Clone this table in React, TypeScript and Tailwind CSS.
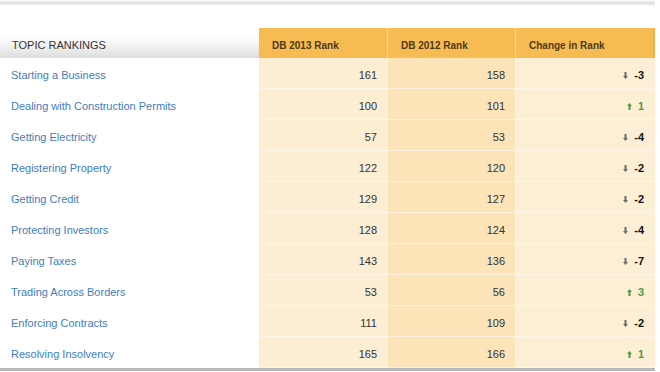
import React from "react";

type Row = { name: string; r13: number; r12: number; change: number };

const rows: Row[] = [
  { name: "Starting a Business", r13: 161, r12: 158, change: -3 },
  { name: "Dealing with Construction Permits", r13: 100, r12: 101, change: 1 },
  { name: "Getting Electricity", r13: 57, r12: 53, change: -4 },
  { name: "Registering Property", r13: 122, r12: 120, change: -2 },
  { name: "Getting Credit", r13: 129, r12: 127, change: -2 },
  { name: "Protecting Investors", r13: 128, r12: 124, change: -4 },
  { name: "Paying Taxes", r13: 143, r12: 136, change: -7 },
  { name: "Trading Across Borders", r13: 53, r12: 56, change: 3 },
  { name: "Enforcing Contracts", r13: 111, r12: 109, change: -2 },
  { name: "Resolving Insolvency", r13: 165, r12: 166, change: 1 },
];

function Arrow({ up }: { up: boolean }) {
  return (
    <svg width="5" height="7" viewBox="0 0 5 7" className="shrink-0">
      {up ? (
        <path d="M2.5 0 L5 3 L3.5 3 L3.5 7 L1.5 7 L1.5 3 L0 3 Z" fill="#4f9a3c" />
      ) : (
        <path d="M2.5 7 L5 4 L3.5 4 L3.5 0 L1.5 0 L1.5 4 L0 4 Z" fill="#6b6b6b" />
      )}
    </svg>
  );
}

export default function App() {
  return (
    <div
      className="w-[660px] h-[372px] bg-white overflow-hidden"
      style={{ fontFamily: '"Liberation Sans", Arial, sans-serif' }}
    >
      <div className="w-[655px] h-[6px] bg-gradient-to-b from-white via-[#dcdcdc] to-white" />
      <div className="h-[22px]" />
      <div className="w-[655px] grid grid-cols-[259px_128px_128px_140px]">
        <div className="h-[30px] flex items-center pt-[4px] pl-[12px] text-[11px] text-[#333] bg-gradient-to-b from-white from-30% to-[#dedede]">
          TOPIC RANKINGS
        </div>
        <div className="h-[30px] flex items-center pt-[4px] pl-[13px] text-[10px] font-bold text-[#4e3a17] bg-[#f6bb52]">
          DB 2013 Rank
        </div>
        <div className="h-[30px] flex items-center pt-[4px] pl-[13px] text-[10px] font-bold text-[#4e3a17] bg-[#f6bb52] border-l border-[#fbd98f]">
          DB 2012 Rank
        </div>
        <div className="h-[30px] flex items-center pt-[4px] pl-[13px] text-[10px] font-bold text-[#4e3a17] bg-[#f6bb52] border-l border-[#fbd98f] border-r-2 border-r-[#efb24a]">
          Change in Rank
        </div>
        {rows.map((r) => (
          <React.Fragment key={r.name}>
            <div className="h-[31px] flex items-center pt-[4px] pl-[11px] text-[11px] text-[#3f7dbd] bg-white">
              {r.name}
            </div>
            <div className="h-[31px] flex items-center justify-end pt-[4px] pr-[10px] text-[11px] text-[#333] bg-[#fdedd3] border-b border-[#fff6e8]">
              {r.r13}
            </div>
            <div className="h-[31px] flex items-center justify-end pt-[4px] pr-[10px] text-[11px] text-[#333] bg-[#fde3b8] border-l border-[#fff3df] border-b border-b-[#fff3df]">
              {r.r12}
            </div>
            <div className="h-[31px] flex items-center justify-end gap-[6px] pt-[4px] pr-[11px] bg-[#fdeed6] border-l border-[#fff6e8] border-b border-b-[#fff6e8]">
              <Arrow up={r.change > 0} />
              <span
                className={
                  r.change > 0
                    ? "text-[11px] font-bold text-[#4f9a3c]"
                    : "text-[11px] font-bold text-[#111]"
                }
              >
                {r.change}
              </span>
            </div>
          </React.Fragment>
        ))}
      </div>
      <div className="w-[655px] h-[3px] bg-[#b8b8b8]" />
    </div>
  );
}
